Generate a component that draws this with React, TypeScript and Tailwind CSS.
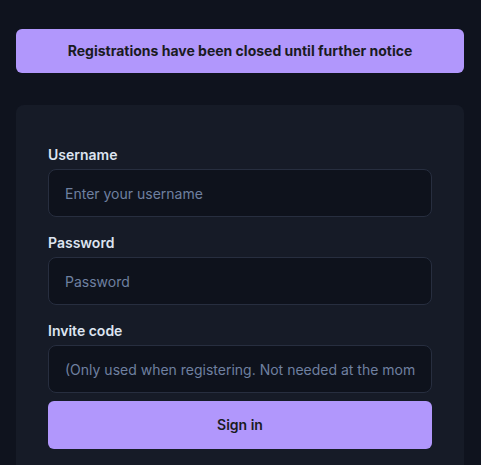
export default function App() {
  return (
    <div className="min-h-screen bg-[#0f131e] pt-[29px] pr-[17px] pb-8 pl-4 font-['Inter','Noto_Sans',sans-serif]">
      <div className="rounded-md bg-[#b197fc] py-3 text-center text-sm leading-5 font-bold text-[#1a1b22]">
        Registrations have been closed until further notice
      </div>

      <form
        className="mt-8 flex flex-col rounded-lg bg-[#161b27] px-8 pt-10 pb-8"
        onSubmit={(e) => e.preventDefault()}
      >
        <Field label="Username" placeholder="Enter your username" />
        <Field label="Password" placeholder="Password" type="password" className="mt-4" />
        <Field
          label="Invite code"
          placeholder="(Only used when registering. Not needed at the moment)"
          className="mt-4"
        />
        <button
          type="submit"
          className="mt-2 h-12 rounded-md bg-[#b197fc] text-sm font-semibold text-[#1a1b22]"
        >
          Sign in
        </button>
      </form>
    </div>
  );
}

function Field({
  label,
  placeholder,
  type = 'text',
  className = '',
}: {
  label: string;
  placeholder: string;
  type?: string;
  className?: string;
}) {
  return (
    <label className={`flex flex-col ${className}`}>
      <span className="mb-1 text-sm leading-5 font-semibold text-[#dde4f0]">{label}</span>
      <input
        type={type}
        placeholder={placeholder}
        className="h-12 rounded-lg border border-[#272e3f] bg-[#0e121c] px-4 text-sm text-[#dde4f0] outline-none placeholder:text-[#6f80a0]"
      />
    </label>
  );
}
